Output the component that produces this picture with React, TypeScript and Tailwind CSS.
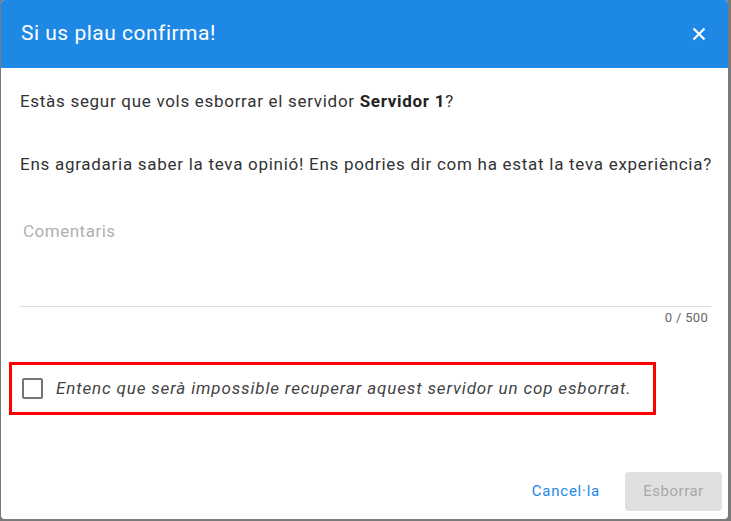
import React from "react";

export default function App() {
  return (
    <div
      className="w-[731px] h-[521px] bg-[#7b7b7b] overflow-hidden"
      style={{ fontFamily: "Roboto, 'Liberation Sans', sans-serif" }}
    >
      <div className="ml-[1px] w-[727px] h-[519px] bg-white rounded-[4px] overflow-hidden flex flex-col">
        <div className="h-[68px] shrink-0 bg-[#1e88e5] flex items-center justify-between pl-[20px] pr-[22px]">
          <h1 className="text-[21px] tracking-[0.5px] text-white font-normal leading-none -mt-[2px]">Si us plau confirma!</h1>
          <svg width="14" height="14" viewBox="0 0 14 14" className="-mt-[1px]">
            <path d="M1.5 1.5 L12.5 12.5 M12.5 1.5 L1.5 12.5" stroke="white" strokeWidth="2.2" strokeLinecap="butt" />
          </svg>
        </div>
        <div className="flex-1 flex flex-col pl-[19px] pr-[17px]">
          <p className="mt-[21px] text-[17px] tracking-[0.7px] leading-[24px] text-[#333] whitespace-nowrap">
            Estàs segur que vols esborrar el servidor <span className="font-bold text-[#222]">Servidor 1</span>?
          </p>
          <p className="mt-[39px] text-[17px] tracking-[0.72px] leading-[24px] text-[#333] whitespace-nowrap">
            Ens agradaria saber la teva opinió! Ens podries dir com ha estat la teva experiència?
          </p>
          <div className="mt-[43px] h-[88px] border-b border-[#dcdcdc] pl-[3px]">
            <span className="text-[17px] tracking-[0.5px] leading-[24px] text-[#b0b0b0]">Comentaris</span>
          </div>
          <div className="mt-[3px] flex justify-end pr-[3px]">
            <span className="text-[13px] tracking-[0.3px] leading-[16px] text-[#666]">0 / 500</span>
          </div>
          <div className="mt-[36px] -ml-[11px] w-[647px] h-[53px] border-[3px] border-[#ff0000] flex items-center pl-[10px]">
            <div className="w-[21px] h-[21px] border-2 border-[#757575] rounded-[2px] shrink-0" />
            <span className="ml-[13px] text-[17px] tracking-[0.85px] italic text-[#444] whitespace-nowrap">
              Entenc que serà impossible recuperar aquest servidor un cop esborrat.
            </span>
          </div>
          <div className="mt-auto mb-[8px] flex justify-end items-center -mr-[11px]">
            <span className="text-[15px] tracking-[0.75px] text-[#1e88e5] mr-[25px]">Cancel·la</span>
            <div className="w-[97px] h-[39px] rounded-[4px] bg-[#e0e0e0] flex items-center justify-center">
              <span className="text-[15px] tracking-[0.5px] text-[#a8a8a8]">Esborrar</span>
            </div>
          </div>
        </div>
      </div>
    </div>
  );
}
